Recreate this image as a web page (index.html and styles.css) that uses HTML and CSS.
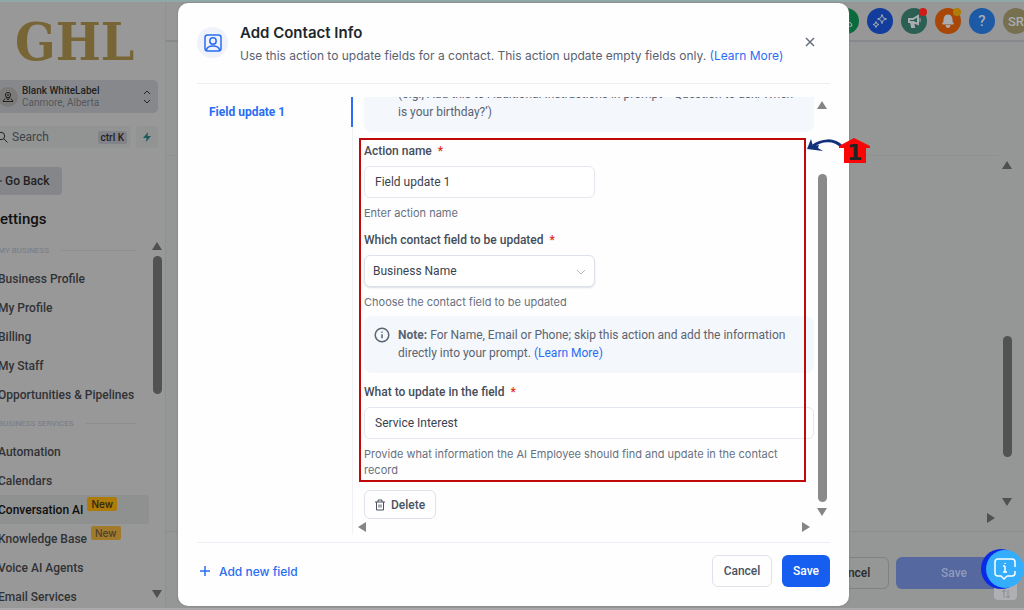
FILE: index.html
```
<!DOCTYPE html>
<html lang="en">
<head>
<meta charset="utf-8">
<title>Add Contact Info</title>
<link rel="stylesheet" href="styles.css">
</head>
<body>
<div class="page">

<div class="sidebar">
  <div class="logo">GHL</div>
  <button class="account">
    <span class="account-icon"><svg width="12" height="12" viewBox="0 0 12 12"><circle cx="6" cy="4" r="2.6"/><circle cx="6" cy="4" r=".6"/><path d="M4 6l2 3 2-3M3 7.500L1 10.500h10L9 7.500"/></svg></span>
    <span class="account-text"><b>Blank WhiteLabel</b><span>Canmore, Alberta</span></span>
    <svg class="updown" width="8" height="14" viewBox="0 0 8 14"><path d="M1 4l3-3 3 3M1 10l3 3 3-3"/></svg>
  </button>
  <div class="search-row">
    <div class="search">
      <svg width="12" height="12" viewBox="0 0 12 12"><circle cx="5" cy="5" r="3.700"/><path d="M8 8l3.500 3.500"/></svg>
      <input type="text" aria-label="Search" placeholder="Search">
      <kbd>ctrl K</kbd>
    </div>
    <button class="bolt" aria-label="Quick actions"><svg width="10" height="12" viewBox="0 0 10 12"><path d="M6 1L1 7h3.500L4 11l5-6H5.500z"/></svg></button>
  </div>
  <button class="back"><svg width="12" height="8" viewBox="0 0 12 8"><path d="M12 4H1M4 1L1 4l3 3"/></svg>Go Back</button>
  <h1 class="settings">Settings</h1>
  <div class="menu">
    <div class="menu-list">
      <div class="menu-head">MY BUSINESS</div>
      <a href="#">Business Profile</a>
      <a href="#">My Profile</a>
      <a href="#">Billing</a>
      <a href="#">My Staff</a>
      <a href="#">Opportunities &amp; Pipelines</a>
      <div class="menu-head">BUSINESS SERVICES</div>
      <a href="#">Automation</a>
      <a href="#">Calendars</a>
      <a href="#" class="active">Conversation AI <span class="new">New</span></a>
      <a href="#">Knowledge Base <span class="new pale">New</span></a>
      <a href="#">Voice AI Agents</a>
      <a href="#">Email Services</a>
    </div>
    <div class="scroll dark">
      <svg width="10" height="8" viewBox="0 0 10 8"><path d="M5 0l5 8H0z"/></svg>
      <div class="thumb"></div>
      <svg class="down" width="10" height="8" viewBox="0 0 10 8"><path d="M0 0h10L5 8z"/></svg>
    </div>
  </div>
</div>

<div class="main">
  <div class="topbar">
    <button class="dot green" aria-label="Phone"><svg width="16" height="16" viewBox="0 0 16 16"><path d="M3 2l3 1 1 3-2 1c1 2 2 3 4 4l1-2 3 1 1 3c-6 2-12-4-11-11z"/></svg></button>
    <button class="dot blue" aria-label="AI"><svg width="16" height="16" viewBox="0 0 16 16"><path d="M10 1.500l1.200 3.300L14.500 6l-3.300 1.200L10 10.500 8.800 7.200 5.500 6l3.300-1.200zM4 8.500l.8 2.200L7 11.500l-2.200.8L4 14.500l-.8-2.200L1 11.500l2.200-.8z"/></svg></button>
    <button class="dot teal" aria-label="Announcements"><svg width="16" height="16" viewBox="0 0 16 16"><path class="bold" d="M3 6h4l5-3v8L7 9H3zM5 9l1 5h2L7 9"/><path d="M14 5v4"/></svg><i class="mark red"></i></button>
    <button class="dot orange" aria-label="Notifications"><svg width="16" height="16" viewBox="0 0 16 16"><path class="fill" d="M8 2c-3 0-4 2-4 5 0 2-1 3-1.500 4h11C13 10 12 9 12 7c0-3-1-5-4-5zM6 12.500h4a2 2 0 0 1-4 0z"/></svg><i class="mark yellow"></i></button>
    <button class="dot sky" aria-label="Help">?</button>
    <button class="dot user">SR</button>
  </div>
  <div class="content">
    <div class="rule"></div>
    <div class="scroll dark">
      <svg width="10" height="8" viewBox="0 0 10 8"><path d="M5 0l5 8H0z"/></svg>
      <div class="thumb"></div>
      <svg width="10" height="8" viewBox="0 0 10 8"><path d="M0 0h10L5 8z"/></svg>
    </div>
    <svg class="right" width="8" height="10" viewBox="0 0 8 10"><path d="M0 0l8 5-8 5z"/></svg>
  </div>
  <div class="bottombar">
    <button class="btn">Cancel</button>
    <button class="btn save">Save</button>
  </div>
</div>

</div>

<div class="modal" role="dialog" aria-labelledby="title">
  <div class="modal-head">
    <span class="contact-icon"><svg width="18" height="18" viewBox="0 0 18 18"><rect x="1" y="1" width="16" height="16" rx="2.500"/><circle cx="9" cy="7" r="3.200"/><path d="M2.500 16c.5-3 3-4 6.500-4s6 1 6.500 4"/></svg></span>
    <div class="head-text">
      <h2 id="title">Add Contact Info</h2>
      <p>Use this action to update fields for a contact. This action update empty fields only. <a href="#">(Learn More)</a></p>
    </div>
    <button class="close" aria-label="Close"><svg width="10" height="10" viewBox="0 0 10 10"><path d="M1 1l8 8M9 1L1 9"/></svg></button>
  </div>

  <div class="modal-body">
    <div class="tabs"><a href="#">Field update 1</a></div>
    <div class="form-wrap">
      <form class="form">
        <div class="note first">
          <div>(e.g., Add this to Additional Instructions in prompt - &lsquo;Question to ask: When is your birthday?&rsquo;)</div>
        </div>
        <label for="name">Action name <em>*</em></label>
        <input class="short" id="name" type="text" value="Field update 1">
        <p class="help">Enter action name</p>
        <label for="field">Which contact field to be updated <em>*</em></label>
        <div class="select">
          <select id="field"><option>Business Name</option></select>
          <svg width="8" height="6" viewBox="0 0 8 6"><path d="M0 1l4 4 4-4"/></svg>
        </div>
        <p class="help">Choose the contact field to be updated</p>
        <div class="note">
          <svg width="16" height="16" viewBox="0 0 16 16"><circle cx="8" cy="8" r="6.800"/><path d="M8 7.200v4M8 4.600v1.200"/></svg>
          <div><b>Note:</b> For Name, Email or Phone; skip this action and add the information directly into your prompt. <a href="#">(Learn More)</a></div>
        </div>
        <label for="what">What to update in the field <em>*</em></label>
        <input id="what" type="text" value="Service Interest">
        <p class="help">Provide what information the AI Employee should find and update in the contact record</p>
        <button type="button" class="btn delete"><svg width="10" height="12" viewBox="0 0 10 12"><path d="M0 3h10M3 3V1h4v2M1.500 3v8h7V3M4 5.500v3M6 5.500v3"/></svg>Delete</button>
      </form>
      <div class="hscroll">
        <svg width="8" height="10" viewBox="0 0 8 10"><path d="M8 0v10L0 5z"/></svg>
        <svg width="8" height="10" viewBox="0 0 8 10"><path d="M0 0l8 5-8 5z"/></svg>
      </div>
    </div>
    <div class="scroll">
      <svg width="10" height="8" viewBox="0 0 10 8"><path d="M5 0l5 8H0z"/></svg>
      <div class="thumb"></div>
      <svg width="10" height="8" viewBox="0 0 10 8"><path d="M0 0h10L5 8z"/></svg>
    </div>
  </div>

  <div class="modal-foot">
    <button class="add"><svg width="12" height="12" viewBox="0 0 12 12"><path d="M6 1v10M1 6h10"/></svg>Add new field</button>
    <button class="btn">Cancel</button>
    <button class="btn primary">Save</button>
  </div>
</div>

<!-- step marker -->
<div class="frame"></div>
<div class="step">
  <svg width="64" height="30" viewBox="0 0 64 30">
    <path class="arrow" d="M35 9C27 0 14 2 6 8"/>
    <path class="tip" d="M4 1L0 11l16 2-5-3 1-3-6 1z"/>
    <path class="house" d="M47 0l16 8v2h-4v15H37V10h-5V8z"/>
  </svg>
  <span>1</span>
</div>

<div class="updates"><svg width="12" height="12" viewBox="0 0 12 12"><path d="M4 10V2M2 4l2-2 2 2M8 2v8M6 8l2 2 2-2"/></svg></div>
<button class="chat" aria-label="Chat"><span><svg width="24" height="24" viewBox="0 0 24 24"><path d="M14 19h5a3 3 0 0 0 3-3v-2M22 10V5a3 3 0 0 0-3-3H5a3 3 0 0 0-3 3v11a3 3 0 0 0 3 3h3l3 3 3-3"/><path d="M12 9v6M10 9h2M10 15h4M12 6v1"/></svg></span></button>
</body>
</html>
```
FILE: styles.css
```
* { box-sizing: border-box; }

body {
  margin: 0;
  height: 100vh;
  overflow: hidden;
  background: #959696;
  font-family: Roboto, "Liberation Sans", sans-serif;
  font-size: 12px;
  color: #222;
}

a { color: #2a6df4; text-decoration: none; }
p, h1, h2 { margin: 0; }
button, input, select { font: inherit; color: inherit; }
button { border: 0; background: none; padding: 0; }
svg { fill: none; stroke: currentColor; flex: none; }

.page {
  display: flex;
  height: 100vh;
  border-top: 2px solid #8fa9a9;
  border-bottom: 2px solid #aaa;
}

/* Sidebar, its left edge is out of view */

.sidebar {
  display: flex;
  flex-direction: column;
  flex: none;
  width: 186px;
  margin-left: -20px;
  padding-left: 20px;
  border-right: 1px solid #8f9092;
  background: #989898;
}

.logo {
  height: 78px;
  padding-left: 15px;
  font: bold 53px/78px "DejaVu Serif Condensed", "DejaVu Serif", serif;
  color: #786536;
}

.account {
  display: flex;
  align-items: center;
  flex: none;
  height: 33px;
  margin: 0 7px 0 -10px;
  padding: 0 7px 0 8px;
  border-radius: 5px;
  background: #87888b;
  text-align: left;
}
.account-icon {
  display: flex;
  align-items: center;
  justify-content: center;
  width: 20px;
  height: 20px;
  border-radius: 50%;
  background: #7b7a79;
}
.account-text { flex: 1; padding-left: 4px; font-size: 10px; line-height: 12px; }
.account-text b { display: block; font-weight: 500; }
.account-text span { color: #55575b; }

.search-row { display: flex; gap: 5px; margin: 13px 7px 0 -10px; }
.search {
  display: flex;
  align-items: center;
  flex: 1;
  height: 22px;
  padding: 0 4px 0 6px;
  border-radius: 4px;
  background: #929494;
}
.search input {
  flex: 1;
  width: 60px;
  min-width: 0;
  padding: 0 0 0 4px;
  border: 0;
  background: none;
}
.search input::placeholder { color: #404246; opacity: 1; }
.search kbd {
  padding: 0 3px;
  border-radius: 2px;
  background: #818388;
  font: 500 10px/13px Roboto, sans-serif;
}
.bolt {
  display: flex;
  align-items: center;
  justify-content: center;
  width: 22px;
  border-radius: 4px;
  background: #929494;
}
.bolt svg { fill: #1f5a5c; stroke: none; }

.back {
  display: flex;
  align-items: center;
  flex: none;
  gap: 3px;
  width: 72px;
  height: 28px;
  margin: 19px 0 0 -10px;
  border-radius: 4px;
  background: #85868a;
  font-weight: 500;
}

.settings {
  height: 34px;
  margin: 7px 0 0 -9px;
  font-size: 15px;
  font-weight: 500;
  line-height: 34px;
  color: #111;
}

.menu { display: flex; flex: 1; min-height: 0; }
.menu-list { flex: 1; min-width: 0; margin-left: -10px; overflow: hidden; }
.menu-list a {
  display: flex;
  align-items: center;
  height: 29px;
  padding-left: 8px;
  border-radius: 4px;
  font-weight: 500;
  color: #303235;
  white-space: nowrap;
}
.menu-list .active { background: #8f9191; color: #0e0e0e; }
.menu-head {
  display: flex;
  align-items: center;
  gap: 12px;
  height: 28px;
  padding: 0 12px 0 8px;
  font-size: 8px;
  font-weight: 500;
  color: #7b8089;
  white-space: nowrap;
}
.menu-head:after { content: ""; flex: 1; height: 1px; background: #8c8e92; }
.new {
  align-self: flex-start;
  height: 14px;
  margin: 2px 0 0 4px;
  padding: 0 4px;
  border-radius: 2px;
  background: #ad7b08;
  font: 500 10px/14px Inter, sans-serif;
  color: #2c2412;
}
.pale { background: #a27a2c; color: #4a4230; }

/* Scroll bars */

.scroll {
  display: flex;
  flex-direction: column;
  align-items: center;
  width: 16px;
  color: #858585;
}
.scroll svg, .hscroll svg, .right { fill: currentColor; stroke: none; }
.scroll .thumb { width: 9px; border-radius: 5px; background: #8a8a8a; }
.dark { color: #505050; }
.dark .thumb { background: #525252; }

.menu .scroll { padding: 6px 0 10px; }
.menu .thumb { height: 138px; margin-top: 6px; }
.menu .down { margin-top: auto; }

/* Page behind the dialog */

.main { display: flex; flex-direction: column; flex: 1; min-width: 0; }
.topbar {
  display: flex;
  justify-content: flex-end;
  align-items: center;
  gap: 8px;
  height: 40px;
  margin-right: -5px;
  border-bottom: 2px solid #88898d;
  background: #979798;
}
.dot {
  display: flex;
  align-items: center;
  justify-content: center;
  position: relative;
  width: 26px;
  height: 26px;
  border-radius: 50%;
  font-size: 15px;
  font-weight: 500;
  color: #a9adb2;
}
.green { background: #096b3c; }
.blue { background: #133d9c; }
.teal { background: #2c5f54; }
.orange { background: #a94708; }
.sky { background: #1c5aa6; }
.user { background: #77704f; font-size: 13px; }
.dot .fill { fill: currentColor; }
.dot .bold { stroke-width: 2; }
.mark { position: absolute; right: 0; top: 0; width: 8px; height: 8px; border-radius: 50%; }
.red { background: #cf1c16; }
.yellow { background: #b07c08; }

.content {
  display: flex;
  flex: 1;
  align-items: flex-start;
  padding-right: 9px;
  border-bottom: 1px solid #8b8c90;
}
.rule { flex: 1; height: 1px; margin-top: 113px; background: #909193; }
.content .scroll { margin-top: 119px; }
.content .thumb { height: 121px; margin: 167px 0 41px; }
.content .right {
  align-self: flex-end;
  margin: 0 20px 8px -28px;
  color: #505050;
}

.bottombar {
  display: flex;
  justify-content: flex-end;
  gap: 7px;
  height: 76px;
  padding: 25px 12px 0 0;
}
.bottombar .btn { width: 74px; border-color: #7f8184; background: none; color: #2a2b2d; }
.bottombar .save { width: 116px; border: 0; background: #55689f; color: #8e9bbb; }

/* Dialog */

.modal {
  position: absolute;
  top: 3px;
  right: 175px;
  bottom: 4px;
  left: 178px;
  display: flex;
  flex-direction: column;
  padding: 0 19px;
  border-radius: 10px;
  background: #fefefe;
  box-shadow: 0 0 2px #777;
}

.modal-head {
  display: flex;
  height: 81px;
  padding-top: 20px;
  border-bottom: 1px solid #eceef1;
  font-family: Inter, "Liberation Sans", sans-serif;
}
.contact-icon {
  display: flex;
  align-items: center;
  justify-content: center;
  width: 31px;
  height: 31px;
  margin-top: 4px;
  border-radius: 50%;
  background: #eff3f9;
  color: #2a6df4;
}
.contact-icon svg { stroke-width: 1.5; }
.head-text { flex: 1; padding-left: 12px; }
.head-text h2 { font-size: 15px; font-weight: 600; line-height: 20px; color: #1d272c; }
.head-text p { margin-top: 4px; line-height: 18px; color: #586273; }
.close { width: 20px; height: 20px; margin: 9px 10px 0 0; color: #667080; }
.close svg { display: block; margin: auto; stroke-width: 1.5; }

.modal-body { display: flex; flex: 1; min-height: 0; margin: 13px 0 8px; }
.tabs { width: 156px; border-right: 1px solid #eff1f5; }
.tabs a {
  display: block;
  height: 30px;
  margin-right: -1px;
  padding-left: 12px;
  border-right: 2px solid #2a6df4;
  font-weight: 700;
  line-height: 30px;
}

.form-wrap { display: flex; flex-direction: column; flex: 1; min-width: 0; overflow: hidden; }
.form {
  flex: 1;
  min-height: 0;
  margin-top: -20px;
  padding-left: 11px;
}
.form label { display: block; margin-top: 11px; font-weight: 500; line-height: 16px; color: #454d5a; }
.form em { margin-left: 3px; font-style: normal; color: #e02b20; }
.form input, .form select {
  display: block;
  width: 100%;
  height: 32px;
  padding: 0 10px;
  border: 1px solid #e3e7ee;
  border-radius: 6px;
  background: #fff;
  color: #3a4350;
}
.form input { margin-top: 7px; }
.form .short, .select { width: 231px; }
.select { position: relative; margin-top: 7px; }
.form select {
  padding: 0 8px;
  border-color: #dde1e8;
  box-shadow: 0 1px 2px #dcdfe5;
  appearance: none;
}
.select svg { position: absolute; top: 14px; right: 10px; color: #b3bac4; }
.help {
  margin-top: 7px;
  padding-right: 8px;
  font-family: Inter, "Liberation Sans", sans-serif;
  font-size: 11px;
  line-height: 16px;
  color: #67717f;
}
.note {
  display: flex;
  gap: 8px;
  margin-top: 6px;
  padding: 10px 10px 11px;
  border-radius: 8px;
  background: #f4f7fb;
  line-height: 18px;
  color: #5a6472;
}
.first { margin-top: 0; padding: 8px 10px 11px 34px; }
.note b { font-weight: 700; }
.note svg { margin-top: 1px; stroke-width: 1.5; }

.btn {
  height: 32px;
  border: 1px solid #dfe2ea;
  border-radius: 6px;
  background: #fefefe;
  font-weight: 500;
  color: #4a525e;
}
.delete {
  display: flex;
  align-items: center;
  justify-content: center;
  gap: 6px;
  width: 72px;
  height: 29px;
  margin-top: 12px;
}

.hscroll {
  display: flex;
  justify-content: space-between;
  padding: 0 4px 2px 5px;
  color: #858585;
}
.modal-body .scroll { padding-top: 4px; }
.modal-body .thumb { flex: 1; margin: 65px 0 6px; }
.modal-body .scroll svg:last-child { margin-bottom: 18px; }

.modal-foot {
  display: flex;
  align-items: flex-start;
  gap: 10px;
  height: 64px;
  padding-top: 12px;
  border-top: 1px solid #eceff5;
}
.modal-foot .btn { width: 60px; }
.modal-foot .primary { width: 48px; border: 0; background: #155eef; color: #fff; }
.add {
  display: flex;
  align-items: center;
  gap: 8px;
  height: 32px;
  margin-right: auto;
  padding-left: 2px;
  font-family: Inter, sans-serif;
  font-weight: 500;
  color: #2a6df4;
}
.add svg { stroke-width: 1.5; }

/* Step marker and chat button */

.frame {
  position: absolute;
  top: 138px;
  left: 359px;
  width: 447px;
  height: 344px;
  border: 2px solid #c00a0a;
  pointer-events: none;
}
.step { position: absolute; top: 138px; left: 807px; }
.step svg { display: block; stroke: none; }
.step .arrow { stroke: #12307c; stroke-width: 3; }
.step .tip { fill: #12307c; }
.step .house { fill: #f90606; }
.step span {
  position: absolute;
  top: 2px;
  left: 40px;
  font: bold 22px/26px "DejaVu Sans", sans-serif;
  color: #222;
}

.updates {
  position: absolute;
  right: 7px;
  bottom: 10px;
  display: flex;
  align-items: flex-end;
  justify-content: center;
  width: 23px;
  height: 22px;
  border-radius: 4px;
  background: #aeb0b3;
  color: #8a8c90;
}

.chat {
  position: absolute;
  right: 3px;
  bottom: 21px;
  width: 40px;
  height: 40px;
  border-radius: 50%;
  background: #0a2ae6;
}
.chat span {
  display: flex;
  align-items: center;
  justify-content: center;
  width: 38px;
  height: 38px;
  margin-left: 5px;
  border-radius: 50%;
  background: #34adfd;
  color: #fff;
}
.chat svg { stroke-width: 1.5; }
```
